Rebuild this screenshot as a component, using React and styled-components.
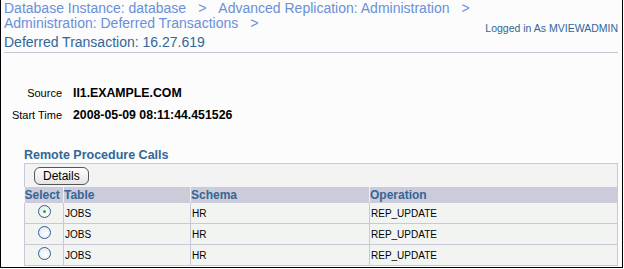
import React from "react";
import styled, { createGlobalStyle } from "styled-components";

const Global = createGlobalStyle`
  body {
    margin: 0;
    background: #ffffff;
    font-family: "Liberation Sans", Arial, sans-serif;
  }
`;

const Frame = styled.div`
  width: 621px;
  height: 267px;
  border-left: 1px solid #000;
  border-right: 1px solid #000;
  border-bottom: 1px solid #000;
  background: #fbfcfb;
  overflow: hidden;
`;

const Header = styled.div`
  padding: 1px 4px 0 3px;
`;

const Crumbs = styled.div`
  font-size: 14px;
  line-height: 15px;
  color: #6b8fd9;
`;

const CrumbLine = styled.div`
  display: flex;
  justify-content: space-between;
  align-items: flex-end;
`;

const Sep = styled.span`
  margin: 0 12px;
`;

const Logged = styled.span`
  font-size: 10.5px;
  line-height: 12px;
  color: #336699;
  margin-bottom: -3px;
`;

const Title = styled.h1`
  margin: 2px 0 0;
  font-size: 14px;
  font-weight: normal;
  line-height: 18px;
  color: #336699;
  padding-bottom: 1px;
  border-bottom: 1px solid #c6c6d6;
`;

const Details = styled.div`
  display: grid;
  grid-template-columns: 58px auto;
  column-gap: 11px;
  row-gap: 9px;
  margin-top: 34px;
  line-height: 13px;
`;

const Label = styled.span`
  font-size: 11px;
  text-align: right;
  color: #000;
`;

const Value = styled.span`
  font-size: 12.3px;
  font-weight: bold;
  color: #000;
`;

const Section = styled.div`
  margin: 26px 4px 0 23px;
`;

const SectionTitle = styled.h2`
  margin: 0;
  font-size: 12.5px;
  line-height: 14px;
  font-weight: bold;
  color: #336699;
  padding-bottom: 1px;
  border-bottom: 1px solid #c8c8d8;
`;

const Toolbar = styled.div`
  background: #f2f3f2;
  padding: 3px 0 2px 9px;
  border-right: 1px solid #c8c8d8;
  border-left: 1px solid #c8c8d8;
`;

const Button = styled.button`
  display: block;
  font-family: inherit;
  font-size: 12px;
  height: 18px;
  padding: 0 8px;
  line-height: 14px;
  border: 1px solid #555;
  border-radius: 6px;
  background: linear-gradient(#ffffff, #e4e4e4);
  color: #000;
`;

const Table = styled.table`
  width: 100%;
  border-collapse: collapse;
  table-layout: fixed;
  font-size: 10px;
  background: #f2f4f1;
`;

const Th = styled.th`
  box-sizing: border-box;
  background: #cccbd9;
  color: #336699;
  font-size: 12px;
  font-weight: bold;
  text-align: left;
  padding: 0;
  height: 16px;
  line-height: 16px;
  width: ${(p) => p.$w || "auto"};
  border-left: 1px solid #eef0ee;
  &:first-child {
    border-left: none;
  }
`;

const Td = styled.td`
  height: 20px;
  padding: 0 0 0 1px;
  border-bottom: 1px solid #c8c8d8;
  border-left: 1px solid #c8c8d8;
  text-align: ${(p) => (p.$center ? "center" : "left")};
  color: #000;
  &:last-child {
    border-right: 1px solid #c8c8d8;
  }
`;

const Radio = styled.span`
  display: inline-block;
  box-sizing: border-box;
  width: 13px;
  height: 13px;
  border-radius: 50%;
  border: 1px solid #2d5f93;
  background: radial-gradient(circle at 60% 60%, #ffffff, #dde4ec);
  position: relative;
  vertical-align: middle;
  margin-top: -4px;
  &::after {
    content: "";
    display: ${(p) => (p.$on ? "block" : "none")};
    position: absolute;
    left: 4px;
    top: 4px;
    width: 3px;
    height: 3px;
    border-radius: 50%;
    background: #2aa52a;
  }
`;

const rows = [
  { table: "JOBS", schema: "HR", op: "REP_UPDATE", on: true },
  { table: "JOBS", schema: "HR", op: "REP_UPDATE" },
  { table: "JOBS", schema: "HR", op: "REP_UPDATE" },
];

export default function App() {
  return (
    <Frame>
      <Global />
      <Header>
        <Crumbs>
          <CrumbLine>
            <span>
              Database Instance: database<Sep>&gt;</Sep>Advanced Replication:
              Administration<Sep>&gt;</Sep>
            </span>
          </CrumbLine>
          <CrumbLine>
            <span>
              Administration: Deferred Transactions<Sep>&gt;</Sep>
            </span>
            <Logged>Logged in As MVIEWADMIN</Logged>
          </CrumbLine>
        </Crumbs>
        <Title>Deferred Transaction: 16.27.619</Title>
        <Details>
          <Label>Source</Label>
          <Value>II1.EXAMPLE.COM</Value>
          <Label>Start Time</Label>
          <Value>2008-05-09 08:11:44.451526</Value>
        </Details>
      </Header>
      <Section>
        <SectionTitle>Remote Procedure Calls</SectionTitle>
        <Toolbar>
          <Button>Details</Button>
        </Toolbar>
        <Table>
          <thead>
            <tr>
              <Th $w="39px">Select</Th>
              <Th $w="127px">Table</Th>
              <Th $w="179px">Schema</Th>
              <Th>Operation</Th>
            </tr>
          </thead>
          <tbody>
            {rows.map((r, i) => (
              <tr key={i}>
                <Td $center>
                  <Radio $on={r.on} />
                </Td>
                <Td>{r.table}</Td>
                <Td>{r.schema}</Td>
                <Td>{r.op}</Td>
              </tr>
            ))}
          </tbody>
        </Table>
      </Section>
    </Frame>
  );
}
